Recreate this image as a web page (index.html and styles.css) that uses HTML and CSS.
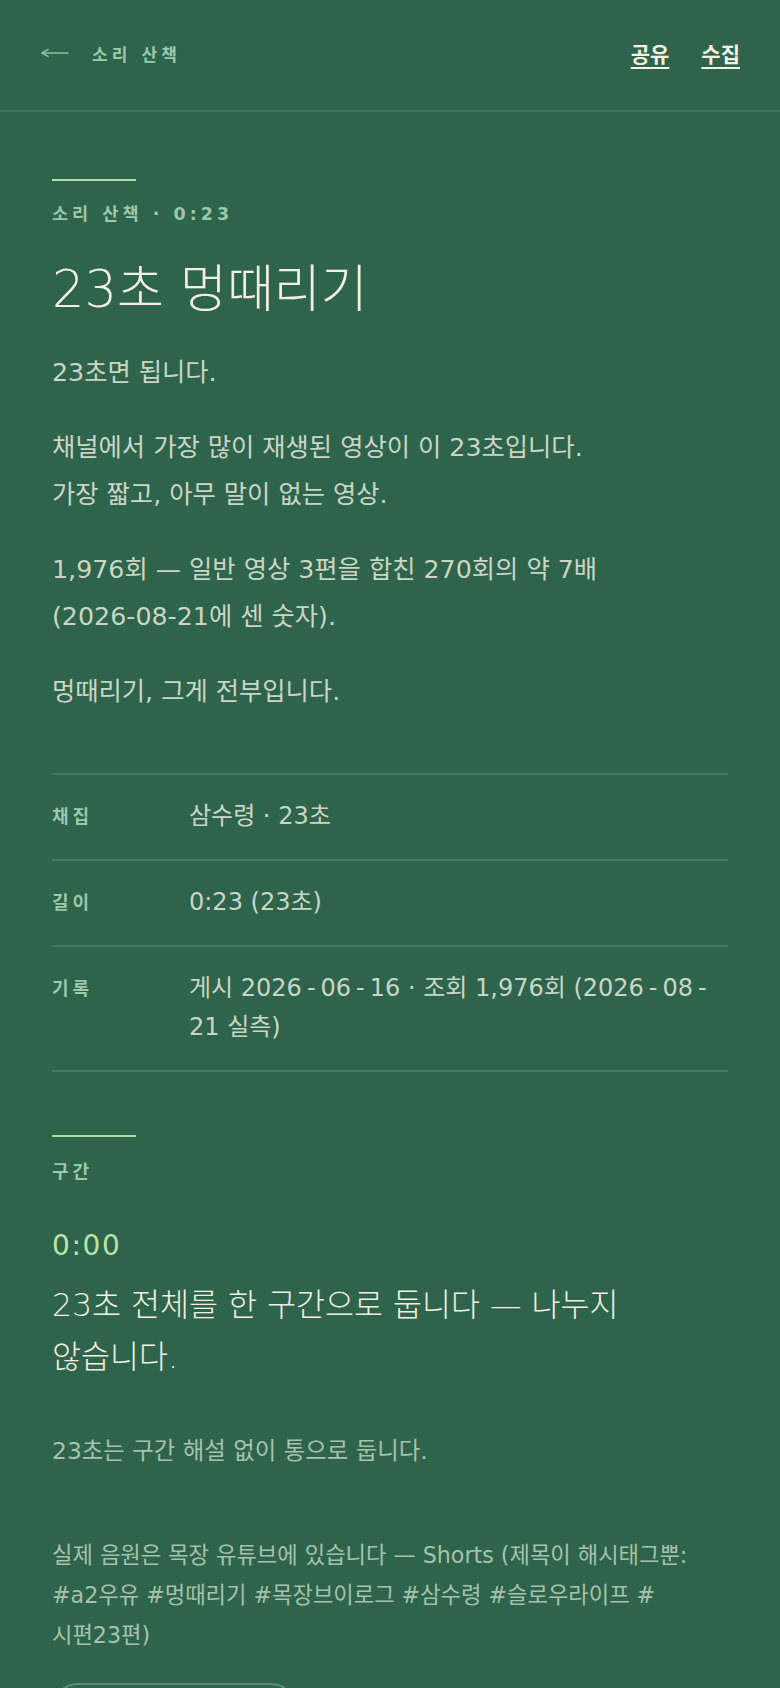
FILE: index.html
```html
<!DOCTYPE html>
<html lang="ko">
<head>
<meta charset="utf-8">
<title>23초 멍때리기 — 소리 산책</title>
<link rel="stylesheet" href="styles.css">
</head>
<body>
<header class="topbar">
  <a class="back" href="#">
    <svg class="back-arrow" width="28" height="10" viewBox="0 0 28 10" aria-hidden="true">
      <path d="M1 5H27M1 5L7 1.6M1 5L7 8.4" fill="none" stroke="currentColor" stroke-width="1.6" stroke-linecap="round"/>
    </svg>
    <span class="back-label">소리 산책</span>
  </a>
  <nav class="actions">
    <a class="action" href="#">공유</a>
    <a class="action" href="#">수집</a>
  </nav>
</header>

<main class="page">
  <section class="intro">
    <div class="accent"></div>
    <p class="kicker">소리 산책 · 0:23</p>
    <h1 class="title">23초 멍때리기</h1>
    <div class="prose">
      <p>23초면 됩니다.</p>
      <p>채널에서 가장 많이 재생된 영상이 이 23초입니다.<br>가장 짧고, 아무 말이 없는 영상.</p>
      <p>1,976회 — 일반 영상 3편을 합친 270회의 약 7배<br>(2026-08-21에 센 숫자).</p>
      <p>멍때리기, 그게 전부입니다.</p>
    </div>
  </section>

  <dl class="meta">
    <div class="meta-row">
      <dt class="meta-key">채집</dt>
      <dd class="meta-val">삼수령 · 23초</dd>
    </div>
    <div class="meta-row">
      <dt class="meta-key">길이</dt>
      <dd class="meta-val">0:23 (23초)</dd>
    </div>
    <div class="meta-row">
      <dt class="meta-key">기록</dt>
      <dd class="meta-val">게시 2026<span class="dash">‐</span>06<span class="dash">‐</span>16 · 조회 1,976회 (2026<span class="dash">‐</span>08<span class="dash">‐</span>21 실측)</dd>
    </div>
  </dl>

  <section class="segments">
    <div class="accent"></div>
    <h2 class="section-label">구간</h2>
    <div class="segment">
      <p class="seg-time">0:00</p>
      <p class="seg-text">23초 전체를 한 구간으로 둡니다 — 나누지 않습니다.</p>
    </div>
    <p class="note">23초는 구간 해설 없이 통으로 둡니다.</p>
    <p class="source">실제 음원은 목장 유튜브에 있습니다 — Shorts (제목이 해시태그뿐: #a2우유 #멍때리기 #목장브이로그 #삼수령 #슬로우라이프 #<br>시편23편)</p>
    <a class="pill" href="#">목장 유튜브에서 듣기 ↗</a>
  </section>
</main>
</body>
</html>
```

FILE: styles.css
```css
* { box-sizing: border-box; }

html, body {
  margin: 0;
  padding: 0;
  background: #2e644b;
}

body {
  font-family: "DejaVu Sans", "Noto Sans CJK KR", sans-serif;
  color: #cbd5c6;
  word-break: keep-all;
}

a { color: inherit; text-decoration: none; }

.topbar {
  height: 112px;
  padding: 0 40px 4px 41px;
  display: flex;
  align-items: center;
  justify-content: space-between;
  border-bottom: 2px solid rgba(255, 255, 255, 0.1);
}

.back {
  display: flex;
  align-items: center;
  gap: 23px;
  color: #9cc9aa;
}

.back-arrow {
  color: #8cbf9e;
}

.back-label {
  font-size: 17px;
  font-weight: 700;
  letter-spacing: 0.24em;
}

.actions {
  display: flex;
  gap: 32px;
}

.action {
  font-size: 21px;
  font-weight: 700;
  color: #f4f0e2;
  text-decoration: underline;
  text-decoration-thickness: 2px;
  text-underline-offset: 5px;
}

.page {
  padding: 67px 52px 80px;
}

.accent {
  width: 84px;
  height: 2px;
  background: #b7dca0;
}

.kicker {
  margin: 21px 0 0;
  font-size: 17.5px;
  line-height: 24px;
  font-weight: 700;
  letter-spacing: 0.23em;
  color: #9dc8a9;
}

.title {
  margin: 33px 0 0;
  font-size: 51px;
  line-height: 62px;
  font-weight: 300;
  color: #f3efe0;
}

.prose {
  margin-top: 28px;
  display: flex;
  flex-direction: column;
  gap: 28px;
}

.prose p {
  margin: 0;
  font-size: 25.3px;
  line-height: 47px;
}

.meta {
  margin: 58px 0 0;
  border-top: 2px solid rgba(255, 255, 255, 0.13);
}

.meta-row {
  display: grid;
  grid-template-columns: 137px 1fr;
  padding: 22px 0 23px;
  border-bottom: 2px solid rgba(255, 255, 255, 0.13);
}

.meta-key {
  margin: 0;
  font-size: 18px;
  line-height: 39px;
  font-weight: 700;
  letter-spacing: 0.22em;
  color: #9dc8a9;
}

.meta-val {
  margin: 0;
  font-size: 24px;
  line-height: 39px;
  color: #cbd5c6;
}

.dash {
  margin: 0 5px;
}

.segments {
  margin-top: 63px;
}

.section-label {
  margin: 23px 0 0;
  font-size: 18px;
  line-height: 24px;
  font-weight: 700;
  letter-spacing: 0.22em;
  color: #9dc8a9;
}

.segment {
  margin-top: 42px;
}

.seg-time {
  margin: 0;
  font-size: 28px;
  line-height: 40px;
  letter-spacing: 0.06em;
  color: #bde2a6;
}

.seg-text {
  margin: 13px 0 0;
  font-size: 31.5px;
  line-height: 52px;
  font-weight: 300;
  color: #f3efe0;
}

.note {
  margin: 48px 0 0;
  font-size: 23.4px;
  line-height: 40px;
  color: #a6c2ac;
}

.source {
  margin: 64px 0 0;
  font-size: 22.2px;
  line-height: 40px;
  color: #a6c2ac;
}

.pill {
  display: inline-block;
  margin-top: 28px;
  padding: 12px 30px;
  border: 2px solid rgba(255, 255, 255, 0.25);
  border-radius: 26px;
  font-size: 18px;
  line-height: 24px;
  color: #cbd5c6;
}
```
